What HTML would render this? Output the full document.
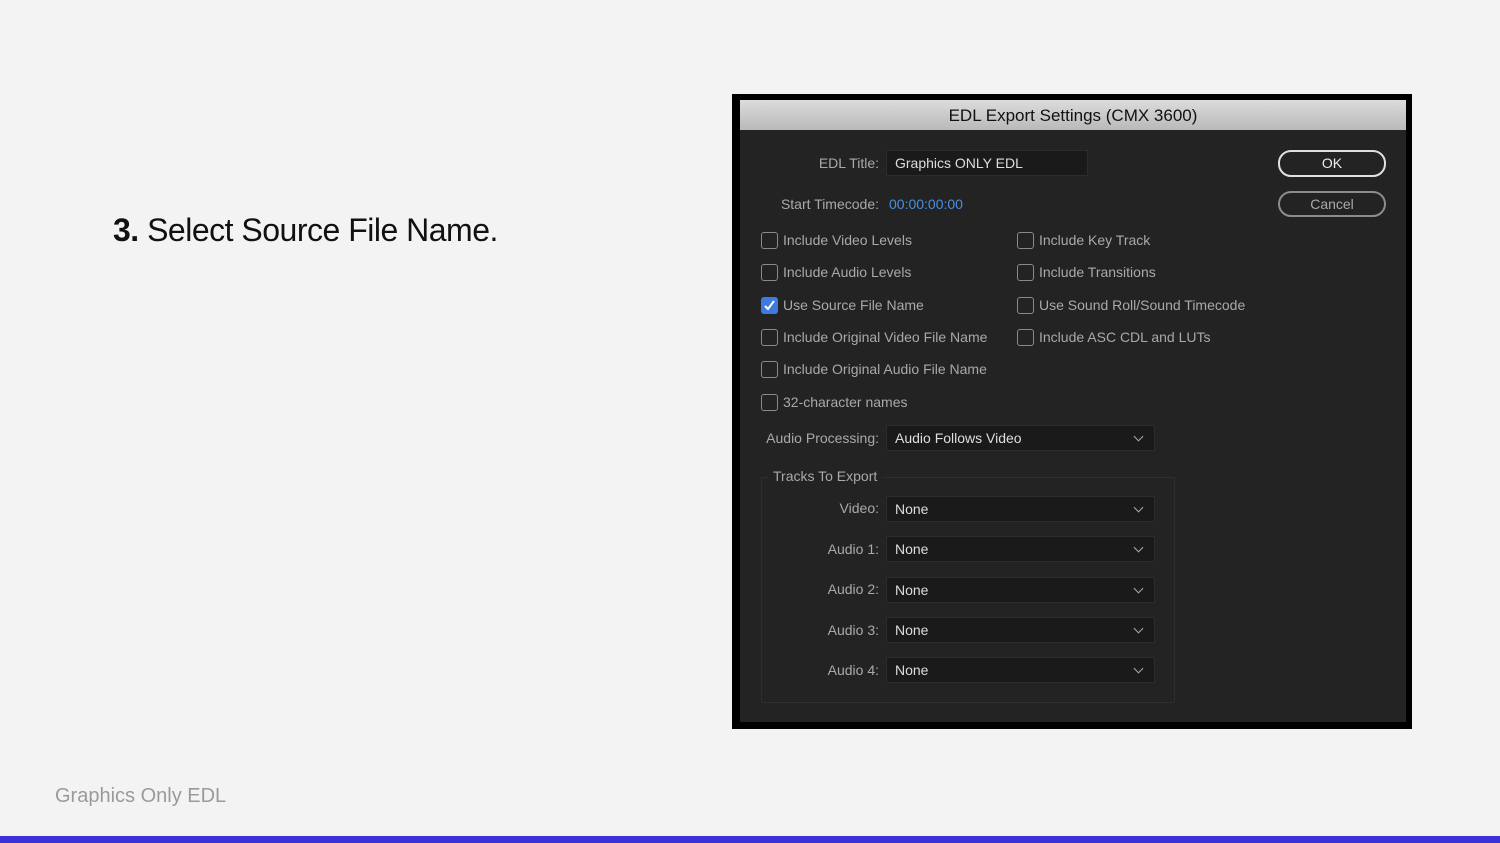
<!DOCTYPE html>
<html><head><style>
*{margin:0;padding:0;box-sizing:border-box}
body{width:1500px;height:843px;background:#f3f3f3;position:relative;overflow:hidden;font-family:"Liberation Sans",sans-serif}
.a{position:absolute}
.frame{left:732px;top:94px;width:680px;height:635px;background:#000}
.dlg{left:740px;top:100px;width:666px;height:622px;background:#232323}
.tb{left:740px;top:100px;width:666px;height:30px;background:linear-gradient(#dcdcdc,#b9b9b9);color:#111;font-size:17px;text-align:center;line-height:31px}
.t{color:#a9a9a9;font-size:14px;white-space:nowrap}
.lab{text-align:right;width:200px}
.fld{background:#1a1a1a;border:1px solid #2c2c2c;color:#ddd;font-size:14px;padding-left:8px;line-height:24px;height:26px}
.cb{width:17px;height:17px;border:1.5px solid #8a8a8a;border-radius:3px}
.dd::after{content:"";position:absolute;right:12px;top:7px;width:6px;height:6px;border-right:1.5px solid #aaa;border-bottom:1.5px solid #aaa;transform:rotate(45deg)}
.btn{border:2px solid #c8c8c8;border-radius:13px;color:#eee;font-size:14px;text-align:center;line-height:22px}
</style></head><body>
<div class="a" style="left:113px;top:212px;font-size:32px;color:#111;letter-spacing:-0.5px"><b>3.</b> Select Source File Name.</div>
<div class="a" style="left:55px;top:785px;font-size:20px;color:#9a9a9a">Graphics Only EDL</div>
<div class="a" style="left:0;top:836px;width:1500px;height:7px;background:#3c30d8"></div>

<div class="a frame"></div>
<div class="a dlg"></div>
<div class="a tb">EDL Export Settings (CMX 3600)</div>

<div class="a t lab" style="left:679px;top:155px">EDL Title:</div>
<div class="a fld" style="left:886px;top:150px;width:202px">Graphics ONLY EDL</div>
<div class="a t lab" style="left:679px;top:196px">Start Timecode:</div>
<div class="a t" style="left:889px;top:196px;color:#4a8fe0">00:00:00:00</div>
<div class="a btn" style="left:1278px;top:150px;width:108px;height:27px;line-height:23px;border-color:#e0e0e0">OK</div>
<div class="a btn" style="left:1278px;top:191px;width:108px;height:26px;border-color:#8c8c8c;color:#aaa">Cancel</div>

<div class="a cb" style="left:761px;top:232px"></div><div class="a t" style="left:783px;top:232px">Include Video Levels</div>
<div class="a cb" style="left:761px;top:264px"></div><div class="a t" style="left:783px;top:264px">Include Audio Levels</div>
<div class="a cb" style="left:761px;top:297px;background:#3d7be0;border-color:#3d7be0"><svg width="15" height="15" viewBox="0 0 15 15" style="position:absolute;left:0;top:0"><path d="M3 8l3 3 6-8" stroke="#fff" stroke-width="2" fill="none"/></svg></div><div class="a t" style="left:783px;top:297px">Use Source File Name</div>
<div class="a cb" style="left:761px;top:329px"></div><div class="a t" style="left:783px;top:329px">Include Original Video File Name</div>
<div class="a cb" style="left:761px;top:361px"></div><div class="a t" style="left:783px;top:361px">Include Original Audio File Name</div>
<div class="a cb" style="left:761px;top:394px"></div><div class="a t" style="left:783px;top:394px">32-character names</div>

<div class="a cb" style="left:1017px;top:232px"></div><div class="a t" style="left:1039px;top:232px">Include Key Track</div>
<div class="a cb" style="left:1017px;top:264px"></div><div class="a t" style="left:1039px;top:264px">Include Transitions</div>
<div class="a cb" style="left:1017px;top:297px"></div><div class="a t" style="left:1039px;top:297px">Use Sound Roll/Sound Timecode</div>
<div class="a cb" style="left:1017px;top:329px"></div><div class="a t" style="left:1039px;top:329px">Include ASC CDL and LUTs</div>

<div class="a t lab" style="left:679px;top:430px">Audio Processing:</div>
<div class="a fld dd" style="left:886px;top:425px;width:269px">Audio Follows Video</div>

<div class="a" style="left:761px;top:477px;width:414px;height:226px;border:1px solid #2e2e2e"></div>
<div class="a t" style="left:768px;top:468px;background:#232323;padding:0 5px">Tracks To Export</div>

<div class="a t lab" style="left:679px;top:500px">Video:</div>
<div class="a fld dd" style="left:886px;top:496px;width:269px">None</div>
<div class="a t lab" style="left:679px;top:541px">Audio 1:</div>
<div class="a fld dd" style="left:886px;top:536px;width:269px">None</div>
<div class="a t lab" style="left:679px;top:581px">Audio 2:</div>
<div class="a fld dd" style="left:886px;top:577px;width:269px">None</div>
<div class="a t lab" style="left:679px;top:622px">Audio 3:</div>
<div class="a fld dd" style="left:886px;top:617px;width:269px">None</div>
<div class="a t lab" style="left:679px;top:662px">Audio 4:</div>
<div class="a fld dd" style="left:886px;top:657px;width:269px">None</div>
</body></html>
